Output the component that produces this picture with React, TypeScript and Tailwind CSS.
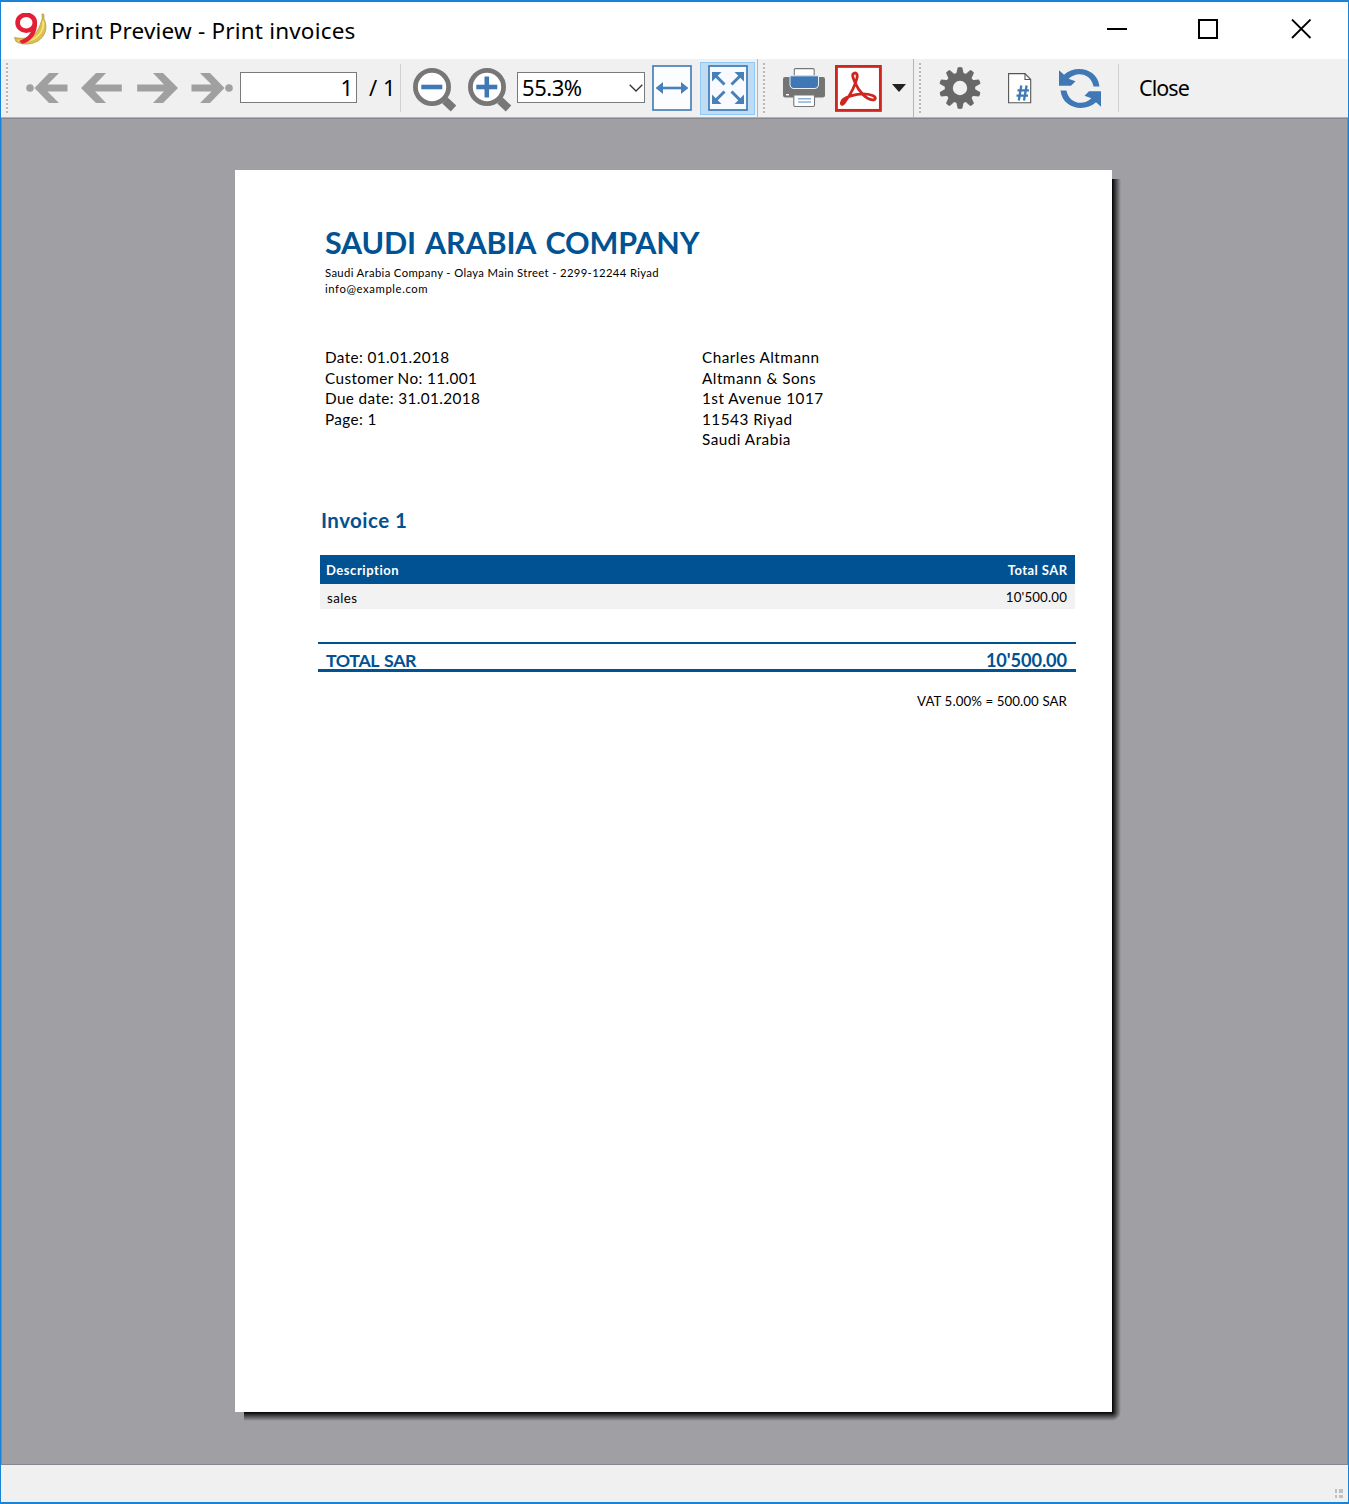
import React from "react";

function Logo() {
  return (
    <svg className="ml-[13px] h-[34px] w-[34px] shrink-0" viewBox="0 0 34 34">
      <path d="M28 1 L29.8 1.2 L30 6 C33 12 33 20 26.5 26 C20 32 8 32.500 2 28.500 L0.500 24.500 C10 26.500 18 25 22.500 19 C26 14 27 9 28.200 6 Z" fill="#dcc04a" stroke="#b39a45" strokeWidth="0.800" />
      <path d="M29 8 C30.500 15 27 22 19 26.200 C14 28.500 8 29 4 27.500" fill="none" stroke="#f3e283" strokeWidth="1.800" />
      <ellipse cx="12.200" cy="9.700" rx="8.600" ry="8" fill="#fff" stroke="#e41f35" strokeWidth="4.600" />
      <path d="M23 9.500 C23.700 20 17 29 8.500 30.800 L5 28 C12 25.500 16.500 22 18 15.500 Z" fill="#e41f35" />
    </svg>
  );
}

function Handle({ className }: { className: string }) {
  return (
    <div className={"h-[51px] w-[2px] shrink-0 bg-[repeating-linear-gradient(to_bottom,#b8b8b8_0px,#b8b8b8_2px,#f4f4f4_2px,#f4f4f4_4px)] " + className} />
  );
}

function Arrow({ flip, dot }: { flip?: boolean; dot?: boolean }) {
  return (
    <svg className={"h-[30px] w-[43px] shrink-0 " + (flip ? "-scale-x-100" : "")} viewBox="0 0 43 30" fill="#a0a0a0">
      {dot ? (
        <>
          <circle cx="4" cy="15" r="3.8" />
          <path d="M8.5 15 L23 0 H33 L21.500 11.5 H41.5 V18.5 H21.5 L33 30 H23 Z" />
        </>
      ) : (
        <path d="M0 15 L15 0 H25 L14 11.5 H40.8 V18.5 H14 L25 30 H15 Z" />
      )}
    </svg>
  );
}

function Zoom({ plus }: { plus?: boolean }) {
  return (
    <svg className="mt-[3px] h-[44px] w-[44px] shrink-0" viewBox="0 0 44 44">
      <path d="M32 32.5 L40.5 40.5" stroke="#777" strokeWidth="8" />
      <circle cx="19" cy="19" r="16.6" fill="#fff" stroke="#777" strokeWidth="4.8" />
      <path d="M8.3 19 H29.3" stroke="#3f78b4" strokeWidth="4.6" />
      {plus && <path d="M18.8 8.5 V29.5" stroke="#3f78b4" strokeWidth="4.6" />}
    </svg>
  );
}

function FitWidth() {
  return (
    <svg className="h-[46px] w-[40px] shrink-0" viewBox="0 0 40 46">
      <rect x="1" y="1" width="38" height="44" fill="#fbfdff" stroke="#4880b8" strokeWidth="1.7" />
      <path d="M10 23 H30" stroke="#4880b8" strokeWidth="2.600" />
      <path d="M3.6 23 L11 17 V29 Z M36.4 23 L29 17 V29 Z" fill="#4880b8" />
    </svg>
  );
}

function FitPage() {
  return (
    <svg className="h-[46px] w-[40px] shrink-0" viewBox="0 0 40 46">
      <rect x="1" y="1" width="38" height="44" fill="#f7faff" stroke="#4880b8" strokeWidth="1.8" />
      <g stroke="#4880b8" strokeWidth="3">
        <path d="M8 11 L16.500 19.500 M32 11 L23.500 19.500 M8 35 L16.500 26.500 M32 35 L23.500 26.500" />
      </g>
      <path d="M4 7 H13.500 L4 16.500 Z M36 7 H26.500 L36 16.500 Z M4 39 H13.500 L4 29.500 Z M36 39 H26.500 L36 29.500 Z" fill="#4880b8" />
    </svg>
  );
}

function Printer() {
  return (
    <svg className="h-[40px] w-[42px] shrink-0" viewBox="0 0 42 40">
      <path d="M0 11 Q0 9 2 9 H40 Q42 9 42 11 V27 Q42 29.5 39.5 29.5 H2.5 Q0 29.5 0 27 Z" fill="#747474" />
      <path d="M11.3 8 V1.8 Q11.3 0.6 12.5 0.6 H30 Q31.2 0.6 31.2 1.8 V8 Z" fill="#fff" stroke="#777" strokeWidth="1.1" />
      <path d="M7 7.800 H35.5 V17 Q35 20.5 32 20.5 H10 Q7.3 20 7 17 Z" fill="#3f78b4" stroke="#e9eff5" strokeWidth="1" />
      <path d="M10.8 27 H31.5 V37.3 Q31.5 38.5 30.3 38.5 H12 Q10.8 38.5 10.8 37.3 Z" fill="#fff" stroke="#777" strokeWidth="1.1" />
      <path d="M15 30.7 H28 M15 34 H28" stroke="#8fb0d6" strokeWidth="1.4" />
      <rect x="3" y="26" width="3" height="1.4" fill="#fff" />
    </svg>
  );
}

function Pdf() {
  return (
    <svg className="h-[47px] w-[47px] shrink-0" viewBox="0 0 47 47">
      <rect x="1.4" y="1.4" width="44" height="44" fill="#fff" stroke="#cf2620" strokeWidth="2.9" />
      <path d="M18 9 C20.5 6.500 23 9 22 13 C20 21 15 30 10.5 36 C8.5 39.500 6.300 40.5 6.300 38 C6.300 35.500 10 32.5 16 30.8 C24 28.5 32 28.5 37.5 30.5 C41.500 32 41 35.200 37.5 34.8 C31 34 24 27 20 17.5 C18.5 13.5 16.7 11 18 9 Z" fill="none" stroke="#cf2620" strokeWidth="2.800" strokeLinejoin="round" />
    </svg>
  );
}

const TEETH = [0, 36, 72, 108, 144, 180, 216, 252, 288, 324];

function Gear() {
  return (
    <svg className="h-[42px] w-[42px] shrink-0" viewBox="-21 -21 42 42">
      <circle r="11.2" fill="none" stroke="#686868" strokeWidth="8" />
      {TEETH.map((a) => (
        <path key={a} transform={`rotate(${a})`} d="M-2.3 -20.6 Q0 -21.3 2.3 -20.6 L4 -13 H-4 Z" fill="#686868" />
      ))}
    </svg>
  );
}

function PageNumber() {
  return (
    <svg className="h-[31px] w-[24px] shrink-0" viewBox="0 0 24 31">
      <path d="M0.6 0.6 H17 L22.7 6.5 V29.8 H0.6 Z" fill="#fff" stroke="#555" strokeWidth="1.1" />
      <path d="M17 0.6 V6.5 H22.7" fill="none" stroke="#555" strokeWidth="1.1" />
      <path d="M13.3 12.5 L10.8 27.5 M18.6 12.5 L16 27.5 M9.5 17.3 H21 M8.5 22.6 H20" stroke="#3f78b4" strokeWidth="2.3" />
    </svg>
  );
}

function Refresh() {
  return (
    <svg className="h-[39px] w-[42px] shrink-0" viewBox="0 0 42 39" fill="#3f78b4">
      <path d="M0 1.2 L5 5.7 C16 -4.5 38.500 -1 40.5 17.500 H34.6 C32 4.5 18 1.500 9.600 9.800 L16.500 12.300 L12 16.700 H0 Z" />
      <path d="M42 37.8 L37 33.3 C26 43.500 3.500 40 1.500 21.500 H7.400 C10 34.500 24 37.500 32.400 29.200 L25.500 26.700 L30 22.300 H42 Z" />
    </svg>
  );
}

const DETAILS = ["Date: 01.01.2018", "Customer No: 11.001", "Due date: 31.01.2018", "Page: 1"];
const RECIPIENT = ["Charles Altmann", "Altmann & Sons", "1st Avenue 1017", "11543 Riyad", "Saudi Arabia"];

function Invoice() {
  return (
    <div className="relative mt-[51px] ml-[233px] h-[1242px] w-[877px]">
      <div className="absolute top-[9px] left-full h-[1233px] w-[9px] bg-[linear-gradient(to_right,#000_0%,#48484a_45%,#a0a0a4_100%)]" />
      <div className="absolute top-full left-[9px] h-[9px] w-[868px] bg-[linear-gradient(to_bottom,#000_0%,#48484a_45%,#a0a0a4_100%)]" />
      <div className="absolute top-full left-full h-[9px] w-[9px] bg-[radial-gradient(circle_at_top_left,#000_0px,#48484a_4px,#a0a0a4_9px)]" />
      <div className="h-full bg-white pt-[52px] font-['Lato',sans-serif] text-black">
        <div className="ml-[90px] h-[43px] whitespace-nowrap text-[30.500px] leading-[40px] font-bold tracking-[-0.180px] text-[#005293] [word-spacing:3px]">SAUDI ARABIA COMPANY</div>
        <div className="ml-[90px] h-[82px] text-[11.300px] leading-[16px]">
          <div className="tracking-[0.350px]">Saudi Arabia Company - Olaya Main Street - 2299-12244 Riyad</div>
          <div className="tracking-[0.600px]">info@example.com</div>
        </div>
        <div className="ml-[90px] flex h-[161px] text-[15.300px] leading-[20.500px]">
          <div className="w-[377px] tracking-[0.380px]">
            {DETAILS.map((t) => <div key={t}>{t}</div>)}
          </div>
          <div className="tracking-[0.480px]">
            {RECIPIENT.map((t) => <div key={t}>{t}</div>)}
          </div>
        </div>
        <div className="ml-[86px] h-[47px] text-[20.500px] leading-[24px] font-bold tracking-[0.450px] text-[#005293]">Invoice 1</div>
        <div className="ml-[85px] w-[755px]">
          <div className="flex h-[29px] items-center justify-between bg-[#005293] pt-[2px] pr-[8px] pl-[6px] text-[13px] font-bold tracking-[0.550px] text-white">
            <span>Description</span>
            <span className="mr-[-0.500px] tracking-[0.450px]">Total SAR</span>
          </div>
          <div className="flex h-[25px] items-center justify-between bg-[#f2f2f2] pt-[2px] pr-[8px] pl-[7px] text-[13.300px] tracking-[0.150px]">
            <span className="pt-[2px] tracking-[0.400px]">sales</span>
            <span>10'500.00</span>
          </div>
        </div>
        <div className="mt-[33px] ml-[83px] flex h-[30px] w-[758px] justify-between border-t-2 border-b-3 border-[#005293] pt-[4px] pr-[9px] pl-[8px] text-[18.200px] leading-[25px] font-bold text-[#005293]">
          <span className="text-[17.800px] tracking-[-0.400px] [word-spacing:1.500px]">TOTAL SAR</span>
          <span className="tracking-[-0.100px]">10'500.00</span>
        </div>
        <div className="mt-[19px] mr-[45px] text-right text-[13.300px] leading-[20px] tracking-[0.080px]">VAT 5.00% = 500.00 SAR</div>
      </div>
    </div>
  );
}

export default function App() {
  return (
    <div className="flex h-[1504px] w-[1349px] flex-col overflow-hidden border-x border-y-2 border-[#1883d7] bg-[#f0f0f0] font-['Noto_Sans',sans-serif] text-black">
      <div className="flex h-[57px] shrink-0 items-center bg-white pb-[2px]">
        <Logo />
        <span className="mt-[2px] ml-[3px] whitespace-nowrap text-[22.500px] tracking-[0.190px]">Print Preview - Print invoices</span>
        <div className="flex-1" />
        <svg className="mb-[1px] h-[20px] w-[205px] shrink-0" viewBox="0 0 205 20" fill="none" stroke="#000" strokeWidth="2">
          <path d="M0 10 H20" />
          <rect x="92" y="1" width="18" height="18" />
          <path d="M185 0.500 L203.500 19 M203.500 0.500 L185 19" strokeWidth="1.800" />
        </svg>
        <div className="w-[36px]" />
      </div>

      <div className="flex h-[58px] shrink-0 items-center text-[22px]">
        <Handle className="ml-[5px]" />
        <div className="ml-[18px]"><Arrow dot /></div>
        <div className="ml-[12px]"><Arrow /></div>
        <div className="ml-[11px]"><Arrow flip /></div>
        <div className="ml-[12px]"><Arrow flip dot /></div>
        <div className="mb-[1px] ml-[7px] flex h-[31px] w-[117px] items-center justify-end border border-[#7a7a7a] bg-white pr-[3px]">1</div>
        <span className="ml-[12px] w-[31px] pb-[1px] whitespace-nowrap">/ 1</span>
        <div className="h-[48px] w-px bg-[#d0d0d0]" />
        <div className="ml-[12px]"><Zoom /></div>
        <div className="ml-[11px]"><Zoom plus /></div>
        <div className="mb-[1px] ml-[5px] flex h-[31px] w-[128px] items-center justify-between border border-[#7a7a7a] bg-white pl-[4px]">
          <span className="tracking-[-0.450px]">55.3%</span>
          <svg className="mr-[1px] h-[8px] w-[14px]" viewBox="0 0 14 8" fill="none" stroke="#333" strokeWidth="1.300">
            <path d="M0.700 0.700 L7 7 L13.300 0.700" />
          </svg>
        </div>
        <div className="ml-[7px]"><FitWidth /></div>
        <div className="ml-[8px] flex h-[53px] w-[55px] items-center justify-center border border-[#90c8f6] bg-[#c0dcf3]"><FitPage /></div>
        <div className="ml-[2px] h-[58px] w-px bg-[#b4b4b4]" />
        <Handle className="ml-[5px]" />
        <div className="ml-[18px]"><Printer /></div>
        <div className="ml-[10px]"><Pdf /></div>
        <svg className="ml-[10px] h-[8px] w-[14px] shrink-0" viewBox="0 0 14 8"><path d="M0 0 H14 L7 8 Z" fill="#222" /></svg>
        <div className="ml-[7px] h-[58px] w-px bg-[#b4b4b4]" />
        <Handle className="ml-[5px]" />
        <div className="ml-[18px]"><Gear /></div>
        <div className="ml-[27px]"><PageNumber /></div>
        <div className="ml-[27px]"><Refresh /></div>
        <div className="ml-[17px] h-[48px] w-px bg-[#d0d0d0]" />
        <span className="ml-[20px] text-[21.500px] tracking-[-0.950px]">Close</span>
      </div>

      <div className="h-px shrink-0 bg-[#b0b6b6]" />
      <div className="h-[1347px] shrink-0 border border-[#828790] bg-[#a0a0a4]">
        <Invoice />
      </div>

      <div className="flex flex-1 items-end justify-end pr-[5px] pb-[4px]">
        <div className="grid h-[9px] w-[8px] grid-cols-[2px_4px] justify-between gap-y-[2px]">
          <div className="bg-[#bfbfbf]" />
          <div className="bg-[#bfbfbf]" />
          <div className="bg-[#bfbfbf]" />
          <div className="bg-[#bfbfbf]" />
        </div>
      </div>
    </div>
  );
}
